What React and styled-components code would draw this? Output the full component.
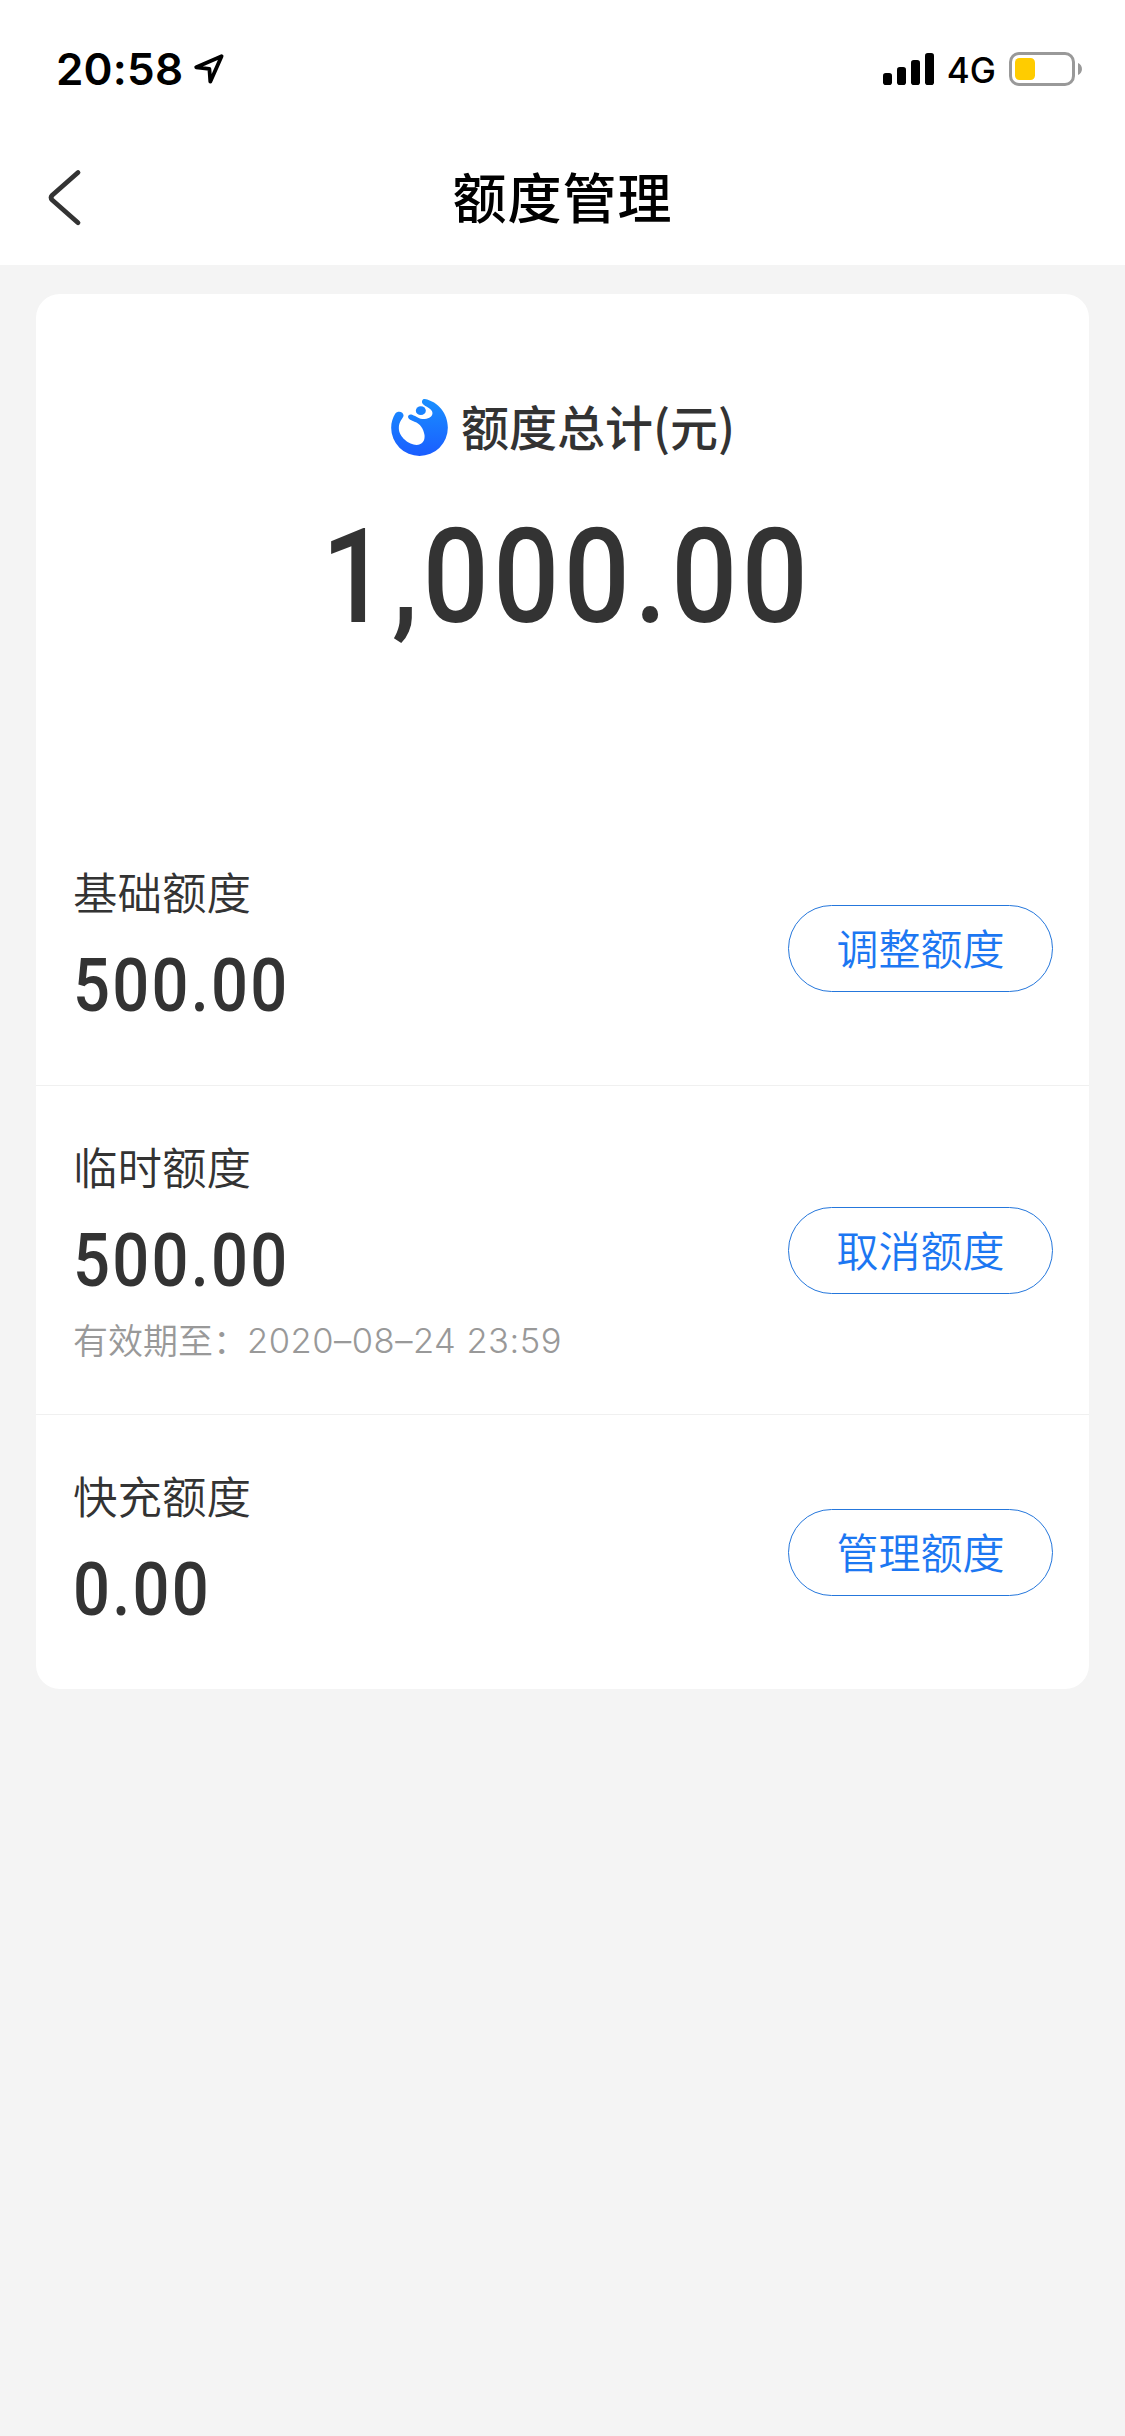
import React from "react";
import styled, { createGlobalStyle } from "styled-components";

const limits = [
  { name: "基础额度", amount: "500.00", action: "调整额度" },
  { name: "临时额度", amount: "500.00", note: "有效期至：", date: "2020–08–24 23:59", action: "取消额度" },
  { name: "快充额度", amount: "0.00", action: "管理额度" },
];

export default function App() {
  return (
    <Page>
      <GlobalStyle />
      <StatusBar>
        <Clock>
          <span>20:58</span>
          <svg width="32" height="32" viewBox="0 0 32 32">
            <path d="M28.6 3.2 3.2 14.3l13.2 1.6.9 12.8z" fill="none" stroke="#000" strokeWidth="3.8" strokeLinejoin="round" />
          </svg>
        </Clock>
        <Signals>
          <svg width="51" height="32" viewBox="0 0 51 32">
            <rect x="0" y="20" width="9" height="12" rx="2.8" />
            <rect x="14" y="14" width="9" height="18" rx="2.8" />
            <rect x="28" y="7" width="9" height="25" rx="2.8" />
            <rect x="42" y="0" width="9" height="32" rx="2.8" />
          </svg>
          <span>4G</span>
          <svg width="74" height="34" viewBox="0 0 74 34">
            <rect x="1.5" y="1.5" width="63" height="31" rx="8.5" fill="none" stroke="#999" strokeWidth="3" />
            <rect x="6" y="6" width="20" height="22" rx="4.5" fill="#fc0" />
            <path d="M69 11c5.3 2 5.3 10 0 12z" fill="#999" />
          </svg>
        </Signals>
      </StatusBar>
      <NavBar>
        <BackButton aria-label="返回">
          <svg width="34" height="58" viewBox="0 0 34 58">
            <path d="M30 3.5 4.2 26.2q-2.4 2.4 0 4.8L30 53.7" fill="none" stroke="#333" strokeWidth="4.8" strokeLinecap="round" strokeLinejoin="round" />
          </svg>
        </BackButton>
        <Title>额度管理</Title>
      </NavBar>
      <Card>
        <Summary>
          <SummaryHead>
            <Logo />
            <span>额度总计(元)</span>
          </SummaryHead>
          <Total>1,000.00</Total>
        </Summary>
        {limits.map((item) => (
          <Row key={item.name} $tall={Boolean(item.note)}>
            <div>
              <Label>{item.name}</Label>
              <Amount>{item.amount}</Amount>
              {item.note && (
                <Note>
                  {item.note}
                  <span>{item.date}</span>
                </Note>
              )}
            </div>
            <ActionButton>{item.action}</ActionButton>
          </Row>
        ))}
      </Card>
    </Page>
  );
}

function Logo() {
  return (
    <svg width="57" height="57" viewBox="0 0 170 171">
      <defs>
        <linearGradient id="logoFill" x1="0" y1="0" x2="0" y2="1">
          <stop offset="0" stopColor="#1990ff" />
          <stop offset="1" stopColor="#1a5dff" />
        </linearGradient>
      </defs>
      <path
        d="M101 0C141 8 170 43 170 86A85 85 0 0 1 0 86C0 70 5 55 12 44C20 33 39 38 37 51C35 59 23 66 23 88C23 114 54 138 76 138C93 138 102 125 100 108C97 88 87 74 70 68L57 62C46 56 50 43 63 47C76 52 85 61 101 60C119 58 128 46 122 36C117 26 97 21 93 12C91 5 95 -1 101 0Z"
        fill="url(#logoFill)"
      />
      <ellipse cx="89" cy="35" rx="15" ry="13" fill="#1983ff" />
    </svg>
  );
}

const GlobalStyle = createGlobalStyle`
  * {
    box-sizing: border-box;
  }
  body {
    margin: 0;
    background: #f4f4f4;
    font-family: "Noto Sans CJK SC", sans-serif;
  }
  svg {
    display: block;
    flex: none;
  }
`;

const Page = styled.div`
  width: 1125px;
  min-height: 2436px;
  background: #f4f4f4;
  color: #333;
`;

const StatusBar = styled.div`
  height: 132px;
  padding: 0 42px 0 56px;
  display: flex;
  justify-content: space-between;
  align-items: flex-start;
  background: #fff;
  color: #000;
  font-family: Inter, sans-serif;
`;

const Clock = styled.div`
  display: flex;
  align-items: center;
  gap: 10px;
  height: 138px;
  font-size: 44px;
  font-weight: 600;
  letter-spacing: 0.2px;
`;

const Signals = styled.div`
  display: flex;
  align-items: center;
  gap: 13px;
  height: 138px;
  font-size: 35px;
  font-weight: 450;
  span {
    padding-top: 2px;
  }
`;

const NavBar = styled.header`
  position: relative;
  height: 133px;
  display: flex;
  justify-content: center;
  align-items: center;
  background: #fff;
`;

const BackButton = styled.button`
  position: absolute;
  left: 48px;
  top: 37px;
  padding: 0;
  border: 0;
  background: none;
`;

const Title = styled.h1`
  margin: 0;
  padding-bottom: 6px;
  color: #000;
  font-size: 54px;
  font-weight: 500;
  line-height: 80px;
  letter-spacing: 1px;
`;

const Card = styled.main`
  margin: 29px 36px 0;
  border-radius: 24px;
  background: #fff;
`;

const Summary = styled.section`
  height: 517px;
  padding-top: 98px;
  display: flex;
  flex-direction: column;
  align-items: center;
`;

const SummaryHead = styled.div`
  display: flex;
  align-items: center;
  gap: 13px;
  height: 70px;
  padding-left: 1px;
  font-size: 48px;
  font-weight: 500;
  line-height: 66px;
  span {
    padding-bottom: 4px;
  }
`;

/* digits are narrowed to get a DIN-like look */
const Total = styled.div`
  margin: 35px 0 0 8px;
  font-family: Roboto, sans-serif;
  font-size: 132px;
  font-weight: 500;
  line-height: 160px;
  letter-spacing: 5.2px;
  transform: scaleX(0.88);
`;

const Row = styled.section`
  height: 275px;
  height: ${({ $tall }) => ($tall ? 329 : 275)}px;
  padding: 0 36px 0 37px;
  display: flex;
  justify-content: space-between;
  align-items: center;
  border-bottom: 1px solid #f0f0f0;
  &:last-child {
    border-bottom: 0;
    height: 274px;
  }
  & > div {
    align-self: flex-start;
    padding-top: 50px;
  }
`;

const Label = styled.div`
  font-size: 44.5px;
  font-weight: 350;
  line-height: 60px;
`;

const Amount = styled.div`
  margin-top: 25px;
  font-family: Roboto, sans-serif;
  font-size: 74px;
  font-weight: 500;
  line-height: 80px;
  letter-spacing: 2.5px;
  transform: scaleX(0.88);
  transform-origin: left;
`;

const Note = styled.div`
  height: 50px;
  margin-top: 13px;
  display: flex;
  align-items: center;
  color: #999;
  font-size: 35px;
  font-weight: 350;
  line-height: 50px;
  span {
    margin-left: -1px;
    padding-top: 4px;
    font-family: Inter, sans-serif;
    font-size: 34.5px;
    letter-spacing: 0.5px;
  }
`;

const ActionButton = styled.button`
  width: 265px;
  height: 87px;
  padding: 0 0 3px;
  border: 1px solid #2577dc;
  border-radius: 44px;
  background: #fff;
  color: #1c77f2;
  font-family: inherit;
  font-size: 42px;
  font-weight: 350;
  line-height: 60px;
`;
